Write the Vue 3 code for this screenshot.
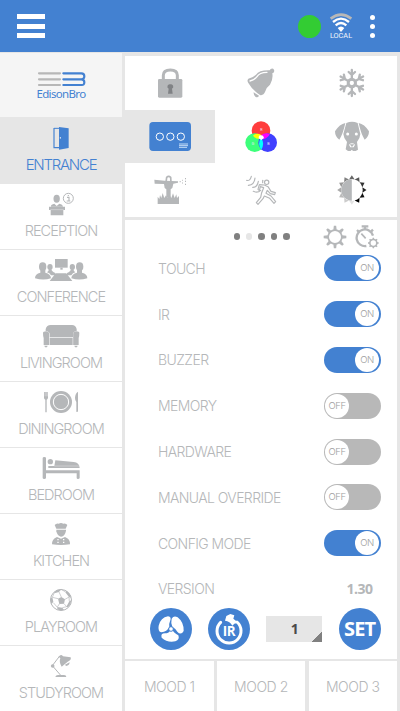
<script setup>
import { ref } from 'vue'

const rooms = [
  { name: 'ENTRANCE', box: '0 27 366 84' },
  { name: 'RECEPTION', box: '0 225 366 84' },
  { name: 'CONFERENCE', box: '0 24 366 84' },
  { name: 'LIVINGROOM', box: '0 222 366 84' },
  { name: 'DININGROOM', box: '0 24 366 84' },
  { name: 'BEDROOM', box: '0 222 366 84' },
  { name: 'KITCHEN', box: '0 30 366 84' },
  { name: 'PLAYROOM', box: '0 228 366 84' },
  { name: 'STUDYROOM', box: '0 426 366 84' },
]
const activeRoom = ref('ENTRANCE')
const settings = ref([
  { name: 'TOUCH', on: true },
  { name: 'IR', on: true },
  { name: 'BUZZER', on: true },
  { name: 'MEMORY', on: false },
  { name: 'HARDWARE', on: false },
  { name: 'MANUAL OVERRIDE', on: false },
  { name: 'CONFIG MODE', on: true },
])
const rays = [0, 45, 90, 135, 180, 225, 270, 315]
const arms = [0, 60, 120, 180, 240, 300]
const sunRays = [
  [0, '#666'], [30, '#555'], [60, '#333'], [90, '#222'], [120, '#111'], [150, '#000'],
  [180, '#e2e2e2'], [210, '#ccc'], [240, '#bbb'], [270, '#aaa'], [300, '#999'], [330, '#808080'],
]
</script>

<template>
  <div class="screen">
    <header class="bar">
      <button class="burger" aria-label="Menu"><i></i><i></i><i></i></button>
      <div class="status">
        <span class="online"></span>
        <div class="wifi">
          <svg width="24" height="19" viewBox="0 0 72 57" fill="none" stroke="#fff" stroke-width="7">
            <path d="M5 17Q36-7 67 17" stroke="#b8b8b8" stroke-width="8" />
            <path d="M12 27Q36 7 60 27M20 37Q36 23 52 37" />
            <path d="M26 45Q36 36 46 45L36 57Z" fill="#fff" stroke="none" />
          </svg>
          <span>LOCAL</span>
        </div>
        <div class="more"><i></i><i></i><i></i></div>
      </div>
    </header>

    <div class="body">
      <nav class="side">
        <div class="brand">
          <svg width="50" height="16" viewBox="0 0 150 48" fill="none" stroke-width="6.5" stroke-linecap="round">
            <path d="M9 7H72M9 25H72M9 42H72" stroke="#b7b7b7" />
            <path d="M82 7H136Q145 7 145 16T136 25H82M136 25Q145 25 145 34T136 42H82" stroke="#4381d1" />
          </svg>
          <span>EdisonBro</span>
        </div>

        <div v-for="r in rooms" :key="r.name" class="room" :class="{ active: r.name === activeRoom }" @click="activeRoom = r.name">
          <svg width="122" height="28" :viewBox="r.box" fill="currentColor">
            <template v-if="r.name === 'ENTRANCE'">
              <path d="M162 40H180" fill="none" stroke="currentColor" stroke-width="3" />
              <path d="M162 39V98H178" fill="none" stroke="currentColor" stroke-width="3.5" />
              <path d="M177 36 206 40V99L177 104Z" />
              <path d="M181 66V71" stroke="#fff" stroke-width="2.5" />
            </template>
            <template v-else-if="r.name === 'RECEPTION'">
              <ellipse cx="170" cy="251" rx="9.5" ry="12" />
              <path d="M153 273Q153 268 163 266L170 273 178 266Q188 268 189 275H153Z" />
              <path d="M147 275H195V285H190V301H152V285H147Z" />
              <path d="M151 284H191" stroke="#fff" stroke-width="1" />
              <circle cx="205" cy="250" r="15" fill="none" stroke="currentColor" stroke-width="3" />
              <path d="M201 247H207V257M200 258H211M205 240V243" fill="none" stroke="currentColor" stroke-width="3.4" />
            </template>
            <template v-else-if="r.name === 'CONFERENCE'">
              <rect x="165" y="33" width="38" height="26" /><rect x="181" y="59" width="7" height="6" />
              <path d="M167 76H199L217 99H149Z" />
              <g v-for="side in ['', 'translate(367 0) scale(-1 1)']" :key="side" :transform="side">
                <ellipse cx="128" cy="56" rx="11" ry="13" />
                <path d="M105 91Q105 77 121 74V65H136V74Q152 77 153 91Q130 98 105 91Z" />
                <ellipse cx="150" cy="57" rx="8" ry="9" />
                <path d="M141 73Q146 70 147 64H154Q155 71 166 75V82H153Q149 75 141 73Z" />
              </g>
            </template>
            <template v-else-if="r.name === 'LIVINGROOM'">
              <path d="M137 249V243Q140 231 152 231H216Q227 231 230 243V249Q220 250 219 258V267H149V258Q148 250 137 249Z" />
              <rect x="149" y="269" width="69" height="22" />
              <path d="M129 255Q129 250 138 250Q147 250 147.500 258V291H131V270Q129 264 129 255ZM238 255Q238 250 229 250Q220 250 219.500 258V291H236V270Q238 264 238 255ZM133 293H143L141 298H135ZM223 293H233L231 298H225Z" />
            </template>
            <template v-else-if="r.name === 'DININGROOM'">
              <circle cx="183" cy="66" r="33" />
              <circle cx="183" cy="66" r="23" fill="none" stroke="#fff" stroke-width="3" />
              <path d="M132 36H144V54Q142 59 140 59V97H136V59Q132 57 132 53Z" />
              <path d="M135 36V49M138.500 36V49M142 36V49" stroke="#fff" stroke-width="1" />
              <path d="M234 35V94Q232 98 229 95V66Q225 62 225 53Q226 40 234 35Z" />
            </template>
            <template v-else-if="r.name === 'BEDROOM'">
              <path d="M128 234Q128 231 133 231Q138 231 138 234V271H239V294Q238 297 234 297Q230 297 230 294V280H138V294Q137 297 133 297Q128 297 128 294Z" />
              <circle cx="151" cy="245" r="8" />
              <path d="M146 258H163L166 241 221 246Q238 248 239 264H146Q142 261 146 258Z" />
              <path d="M163 258H239" stroke="#fff" stroke-width="1" />
            </template>
            <template v-else-if="r.name === 'KITCHEN'">
              <path d="M169 56 164 45Q169 39 176 41Q183 37 190 41Q198 39 202 45L197 56Z" />
              <path d="M169 59H198V62Q195 79 183 80Q172 79 169 64Z" />
              <path d="M156 103Q155 88 171 81L183 86 195 81Q211 87 210 103Q183 107 156 103Z" />
              <path d="M174 87V91M191 87V91M174 95V99M191 95V99" stroke="#fff" stroke-width="4" />
            </template>
            <template v-else-if="r.name === 'PLAYROOM'">
              <circle cx="183" cy="270" r="31.500" fill="none" stroke="currentColor" stroke-width="3" />
              <path d="M174 266 184 261 195 268 192 281 178 282ZM163 246Q172 236 184 238L177 246 163 250ZM199 242Q211 250 213 263L207 261 197 248ZM151 266 157 262 160 275 155 282Q151 275 151 266ZM208 274 214 271Q212 285 204 292L199 290ZM172 291 187 293 192 300Q180 303 172 298Z" />
              <path d="M177 246 184 261M195 268 207 261M192 281 200 290M178 282 172 291M174 266 157 262M163 248 157 262M184 238 198 247M160 278 172 292M187 293 200 290M208 274 207 261" fill="none" stroke="currentColor" stroke-width="2" />
            </template>
            <template v-else>
              <path d="M179 438 157 467 183 497" fill="none" stroke="currentColor" stroke-width="3" />
              <circle cx="158" cy="468" r="5.500" />
              <path d="M176 440Q183 431 189 439L212 442Q215 451 203 455L185 470Q176 457 181 445Z" />
              <path d="M209 457Q209 466 198 468L195 464Z" />
              <path d="M166 501Q167 495 174 495H192Q199 495 199 501Z" />
            </template>
          </svg>
          <span>{{ r.name }}</span>
        </div>
      </nav>

      <main class="main">
        <section class="devices">
          <div>
            <svg viewBox="9 18 270 162" fill="#b5b7b9">
              <path d="M124 92V76Q124 60 145 60Q166 60 166 76V92" fill="none" stroke="#b5b7b9" stroke-width="9" />
              <rect x="108" y="87" width="73" height="56" rx="4" />
              <path d="M145 103A7 7 0 0 1 150 116L152 131H138L140 116A7 7 0 0 1 145 103Z" fill="#808285" />
            </svg>
          </div>
          <div>
            <svg viewBox="279 18 273 162" fill="#b5b7b9">
              <path d="M443 61Q411 60 402 74Q391 84 379 86Q374 92 379 99Q391 120 414 135Q424 138 430 124Q433 112 444 104Q454 88 451 70Q459 67 456 59Q452 53 446 57Z" />
              <path d="M435 67Q412 67 405 80Q397 91 384 93" fill="none" stroke="#fff" stroke-width="4" stroke-linecap="round" />
              <path d="M395 127 411 137Q408 144 401 141Q394 136 395 127Z" />
            </svg>
          </div>
          <div>
            <svg viewBox="138 18 273 162" fill="none" stroke="#b5b7b9" stroke-width="7" stroke-linecap="round">
              <circle cx="275.500" cy="99" r="11" stroke-width="9" />
              <g v-for="a in arms" :key="a" :transform="`rotate(${a} 275.500 99)`">
                <path d="M275.500 88V60M266 66 275.500 75 285 66" />
              </g>
            </svg>
          </div>

          <div class="picked">
            <svg viewBox="9 180 270 159">
              <rect x="82" y="216" width="125" height="87" rx="11" fill="#4381d1" />
              <g fill="none" stroke="#fff" stroke-width="3"><circle cx="113.500" cy="260" r="11" /><circle cx="145" cy="260" r="11" /><circle cx="176.500" cy="260" r="11" /></g>
              <path d="M171 282H198M171 287H198M171 292H195" stroke="#c4dcf7" stroke-width="3" />
            </svg>
          </div>
          <div>
            <svg viewBox="279 180 273 159">
              <circle cx="417" cy="242" r="28" fill="#ff3d3d" />
              <circle cx="398" cy="278" r="28" fill="#3dff7b" />
              <circle cx="437" cy="278" r="28" fill="#4040ff" />
              <path d="M393 257Q404 247 418 255L415 266Q404 269 393 257Z" fill="#ffff00" />
              <path d="M418 255Q432 246 443 253Q438 264 424 268Z" fill="#ff00ff" />
              <path d="M417 264Q429 280 418 299Q405 282 417 264Z" fill="#00ffff" />
              <path d="M411 257Q417 254 423 257L426 264 418 270 410 265Z" fill="#fff" />
              <g class="rgb"><text x="418" y="242">R</text><text x="393" y="284">G</text><text x="439" y="284">B</text></g>
            </svg>
          </div>
          <div>
            <svg viewBox="138 180 273 159" fill="#b5b7b9">
              <path d="M259 219Q276 212 293 219L301 252Q300 266 291 276L294 299 287 303H279Q275 297 272 303H264L257 298 261 276Q251 265 250 252Z" />
              <path d="M256 219Q239 222 225 244Q225 260 238 269Q249 252 256 219ZM296 219Q313 222 327 244Q327 260 314 269Q303 252 296 219Z" />
              <circle cx="263" cy="252" r="4.500" fill="#fff" /><circle cx="289" cy="252" r="4.500" fill="#fff" />
              <path d="M267 284Q276 276 285 284L281 292H271Z" fill="#fff" /><path d="M269 283H283L276 291Z" />
            </svg>
          </div>

          <div>
            <svg viewBox="9 9 270 162" fill="#b5b7b9">
              <path d="M97 59 128 62 168 64V68L154 71 151 84 146 88V113H133V88L128 84 126 72 98 71Z" />
              <path d="M132 67 134 52Q140 46 146 52L147 67" fill="none" stroke="#b5b7b9" stroke-width="5" />
              <path d="M107 132V110L112 117 114 105 118 114 122 99 127 114 132 106 137 114 143 106 148 114 153 100 158 114 163 103 165 114 171 108V132Z" />
              <path d="M173 65H176M180 61H182M180 69H182M189 56H192M189 64H192M189 73H192" stroke="#b5b7b9" stroke-width="4" />
            </svg>
          </div>
          <div>
            <svg viewBox="279 9 273 162" fill="none" stroke="#b5b7b9" stroke-width="3.500" stroke-linecap="round" stroke-linejoin="round">
              <path d="M374 61Q384 64 388 49M379 76Q397 75 399 54M392 82Q406 82 409 64M394 94Q407 100 416 91" />
              <circle cx="434" cy="67" r="6.500" />
              <path d="M412 74 427 75 438 80 447 94 460 98 458 104 445 101 436 91 432 100 447 108 461 125 456 130 443 115 427 108 423 116 408 133 403 128 416 112 419 98 425 83 415 80 412 92 408 88Z" />
              <path d="M422 61V68" />
            </svg>
          </div>
          <div>
            <svg viewBox="138 9 273 162">
              <path v-for="[a, c] in sunRays" :key="a" :fill="c" d="M267 58.500Q275.500 56 284 58.500L275.500 46Z" :transform="`rotate(${a} 275.500 90)`" />
              <path d="M275.500 58A32 32 0 0 0 275.500 122Z" fill="#b5b7b9" />
            </svg>
          </div>
        </section>

        <section class="panel">
          <div class="tools">
            <div class="dots"><i></i><i class="current"></i><i></i><i></i><i></i></div>
            <svg class="gear" width="24" height="24" viewBox="192 194 72 72" fill="none" stroke="#b5b7b9">
              <circle cx="228" cy="230" r="20.500" stroke-width="5" />
              <path v-for="a in rays" :key="a" d="M223 209 224.500 196H231.500L233 209Z" fill="#b5b7b9" stroke="none" :transform="`rotate(${a} 228 230)`" />
            </svg>
            <svg class="timer" width="24" height="24" viewBox="287 194 72 72" fill="none" stroke="#b5b7b9">
              <path d="M307 198H327M317 200V208" stroke-width="7" />
              <path d="M293 209 300 216M341 208 335 214" stroke-width="7" />
              <path d="M341 226A25 25 0 1 0 321 257" stroke-width="7" />
              <path d="M306 220 319 234" stroke-width="5" />
              <circle cx="342" cy="248" r="10.500" stroke-width="5" />
              <path v-for="a in rays" :key="a" d="M339 238 340 232H344L345 238Z" fill="#b5b7b9" stroke="none" :transform="`rotate(${a} 342 248)`" />
            </svg>
          </div>

          <div v-for="s in settings" :key="s.name" class="row">
            <span>{{ s.name }}</span>
            <button class="toggle" :class="{ on: s.on }" @click="s.on = !s.on"><b>{{ s.on ? 'ON' : 'OFF' }}</b></button>
          </div>
          <div class="row">
            <span>VERSION</span>
            <strong>1.30</strong>
          </div>

          <div class="actions">
            <button class="round">
              <svg width="42" height="42" viewBox="82 115 126 126" fill="#fff">
                <path d="M140 172Q133 186 116 188Q105 185 108 168Q114 144 136 140Q148 142 142 155Q138 163 140 172Z" />
                <path d="M149 171Q144 158 147 147Q153 137 165 143Q184 158 183 184Q175 198 164 186Q158 176 149 171Z" />
                <path d="M150 182Q153 190 167 197Q172 210 158 215Q134 220 117 204Q113 191 127 191Q138 191 142 183Z" />
                <circle cx="145" cy="178" r="7" stroke="#4381d1" stroke-width="3" />
              </svg>
            </button>
            <button class="round">
              <svg width="42" height="42" viewBox="256 115 126 126">
                <path d="M294 158A36 36 0 1 0 343 157" fill="none" stroke="#fff" stroke-width="9" stroke-linecap="round" />
                <path d="M307 153 311 139 323 133 335 137 332 147 347 159 335 162 329 168Q322 155 307 153Z" fill="#fff" />
                <text class="ir" x="319" y="198">IR</text>
              </svg>
            </button>
            <div class="select">1</div>
            <button class="round set">SET</button>
          </div>
        </section>

        <section class="moods">
          <div>MOOD 1</div><div>MOOD 2</div><div>MOOD 3</div>
        </section>
      </main>
    </div>
  </div>
</template>

<style>
body { margin: 0; }
</style>

<style scoped>
* { box-sizing: border-box; }
button { border: 0; padding: 0; background: none; font: inherit; }
svg { display: block; }
.screen { width: 400px; height: 711px; overflow: hidden; display: flex; flex-direction: column; background: #e6e6e6; font-family: Inter, "Liberation Sans", sans-serif; font-weight: 300; color: #b5b7b9; }
.bar { height: 52px; flex: none; background: #4381d1; display: flex; justify-content: space-between; align-items: center; padding: 0 25px 0 17px; }
.burger { width: 28px; display: flex; flex-direction: column; gap: 4.500px; }
.burger i { height: 5px; background: #fff; }
.status { display: flex; align-items: center; }
.online { width: 23px; height: 23px; border-radius: 50%; background: #33cc33; margin-right: 8px; }
.wifi { width: 24px; display: flex; flex-direction: column; align-items: center; color: #f4f8fd; font: 400 7.300px/8px Roboto, sans-serif; margin-right: 17px; }
.more { display: flex; flex-direction: column; gap: 4px; width: 5px; }
.more i { width: 5px; height: 5px; border-radius: 50%; background: #fff; }
.body { flex: 1; display: flex; min-height: 0; }
.side { width: 122px; flex: none; padding-top: 1px; }
.brand { height: 65px; background: #f5f5f5; border-bottom: 1px solid #e6e6e6; display: flex; flex-direction: column; align-items: center; padding-top: 18px; }
.brand span { font: 400 11.500px/17px "Noto Sans", sans-serif; color: #4381d1; margin-top: -2px; letter-spacing: -0.65px; }
.room { height: 66px; background: #fff; border-bottom: 1px solid #e6e6e6; padding-top: 6px; }
.room span { display: block; text-align: center; font-size: 14.500px; line-height: 20px; margin-top: 3px; white-space: nowrap; letter-spacing: -0.95px; }
.room.active { background: #e6e6e6; color: #4381d1; }
.room.active span { font-size: 15px; letter-spacing: -1.25px; }
.main { width: 272px; margin-left: 3px; display: flex; flex-direction: column; padding-top: 4px; }
.devices { display: grid; grid-template-columns: 90px 91px 91px; grid-template-rows: 54px 53px 54px; background: #fff; flex: none; }
.devices svg { width: 100%; height: 100%; }
.picked { background: #e6e6e6; }
.rgb text { font: 11px Roboto, sans-serif; fill: #ececff; text-anchor: middle; }
.panel { margin-top: 2.500px; height: 439px; background: #fff; flex: none; }
.tools { height: 26px; display: flex; align-items: center; padding: 8px 18px 0 108.500px; }
.dots { display: flex; gap: 5.800px; flex: 1; }
.dots i { width: 6.600px; height: 6.600px; border-radius: 50%; background: #808080; }
.dots .current { background: #e6e6e6; }
.gear { margin-right: 8px; }
.row { height: 45.800px; display: flex; justify-content: space-between; align-items: center; padding: 0 16.500px 0 33px; font-size: 14px; letter-spacing: -0.6px; }
.row strong { font: 700 14px "Open Sans", sans-serif; letter-spacing: -0.5px; margin-right: 8px; }
.toggle { width: 57px; height: 26px; border-radius: 13px; padding: 1px 1.500px; display: flex; align-items: center; background: #b8b8b8; }
.toggle b { width: 24px; height: 24px; border-radius: 50%; background: #fff; display: flex; align-items: center; justify-content: center; font: 300 9.500px/24px Inter, sans-serif; color: #a0a0a0; letter-spacing: -0.4px; }
.toggle.on { background: #4381d1; justify-content: flex-end; }
.actions { display: flex; align-items: center; padding: 0 16.500px 0 24.500px; height: 42px; margin-top: -3.500px; }
.round { width: 42px; height: 42px; border-radius: 50%; background: #4381d1; color: #fff; margin-right: 16px; }
.ir { font: 700 40px "Open Sans", sans-serif; fill: #fff; text-anchor: middle; letter-spacing: -1px; }
.select { width: 57px; height: 26px; background: linear-gradient(135deg, transparent 50%, #808080 50%) right bottom / 10px 10px no-repeat #e6e6e6; padding-left: 2px; text-align: center; font: 700 14px/26px "Open Sans", sans-serif; color: #4a4a4a; margin-right: 16.500px; }
.round.set { font: 700 20px/42px "Open Sans", sans-serif; letter-spacing: -0.9px; margin-right: 0; }
.moods { margin-top: 2.500px; flex: 1; display: grid; grid-template-columns: 88.500px 88px 88.500px; gap: 3.500px; }
.moods div { background: #fff; text-align: center; font-size: 14px; line-height: 51px; letter-spacing: -0.45px; }
</style>
